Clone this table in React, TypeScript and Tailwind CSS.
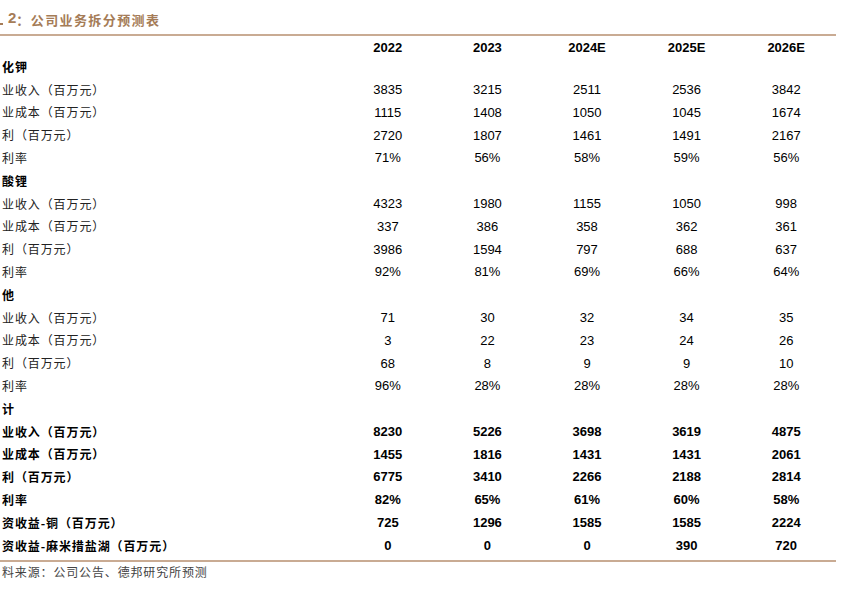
const years = ["2022", "2023", "2024E", "2025E", "2026E"];

type Row = { label: string; values?: string[]; bold?: boolean; section?: boolean };

const rows: Row[] = [
  { label: "化钾", section: true },
  { label: "业收入（百万元）", values: ["3835", "3215", "2511", "2536", "3842"] },
  { label: "业成本（百万元）", values: ["1115", "1408", "1050", "1045", "1674"] },
  { label: "利（百万元）", values: ["2720", "1807", "1461", "1491", "2167"] },
  { label: "利率", values: ["71%", "56%", "58%", "59%", "56%"] },
  { label: "酸锂", section: true },
  { label: "业收入（百万元）", values: ["4323", "1980", "1155", "1050", "998"] },
  { label: "业成本（百万元）", values: ["337", "386", "358", "362", "361"] },
  { label: "利（百万元）", values: ["3986", "1594", "797", "688", "637"] },
  { label: "利率", values: ["92%", "81%", "69%", "66%", "64%"] },
  { label: "他", section: true },
  { label: "业收入（百万元）", values: ["71", "30", "32", "34", "35"] },
  { label: "业成本（百万元）", values: ["3", "22", "23", "24", "26"] },
  { label: "利（百万元）", values: ["68", "8", "9", "9", "10"] },
  { label: "利率", values: ["96%", "28%", "28%", "28%", "28%"] },
  { label: "计", section: true },
  { label: "业收入（百万元）", values: ["8230", "5226", "3698", "3619", "4875"], bold: true },
  { label: "业成本（百万元）", values: ["1455", "1816", "1431", "1431", "2061"], bold: true },
  { label: "利（百万元）", values: ["6775", "3410", "2266", "2188", "2814"], bold: true },
  { label: "利率", values: ["82%", "65%", "61%", "60%", "58%"], bold: true },
  { label: "资收益-铜（百万元）", values: ["725", "1296", "1585", "1585", "2224"], bold: true },
  { label: "资收益-麻米措盐湖（百万元）", values: ["0", "0", "0", "390", "720"], bold: true },
];

const cjk = "font-['Noto_Sans_CJK_SC',sans-serif]";
const num = "font-['Liberation_Sans',Arial,sans-serif]";

export default function App() {
  return (
    <div className="h-[598px] w-[841px] bg-white text-black">
      <div className="w-[836px]">
        <div className={`flex h-[34px] items-end pb-[5px] text-[13px] font-bold tracking-[1.4px] text-[#a57c57] ${cjk}`}>
          <span className="mr-[5px] mb-[4px] h-[2px] w-[3px] bg-[#a57c57]" />
          <span className={`${num} text-[15px] tracking-normal`}>2</span>
          <span>：公司业务拆分预测表</span>
        </div>
        <div className="h-[1.5px] bg-[#c9ab93]" />

        <div className="grid h-[20px] grid-cols-[338px_repeat(5,1fr)] items-center pt-[2px]">
          <div />
          {years.map((y) => (
            <div key={y} className={`text-center text-[13px] font-bold ${num}`}>
              {y}
            </div>
          ))}
        </div>

        {rows.map((r, i) => (
          <div key={i} className="grid h-[22.8px] grid-cols-[338px_repeat(5,1fr)] items-center">
            <div
              className={`pl-[2px] text-[12px] tracking-[0.9px] ${cjk} ${
                r.section || r.bold ? "font-bold" : "text-[#222]"
              }`}
            >
              {r.label}
            </div>
            {(r.values ?? ["", "", "", "", ""]).map((v, j) => (
              <div
                key={j}
                className={`text-center text-[13px] ${num} ${r.bold ? "font-bold" : ""}`}
              >
                {v}
              </div>
            ))}
          </div>
        ))}

        <div className="mt-[3px] h-[1.5px] bg-[#c9ab93]" />
        <div className={`flex h-[21px] items-center pl-[2px] text-[12px] tracking-[0.85px] text-[#444] ${cjk}`}>
          料来源：公司公告、德邦研究所预测
        </div>
      </div>
    </div>
  );
}
